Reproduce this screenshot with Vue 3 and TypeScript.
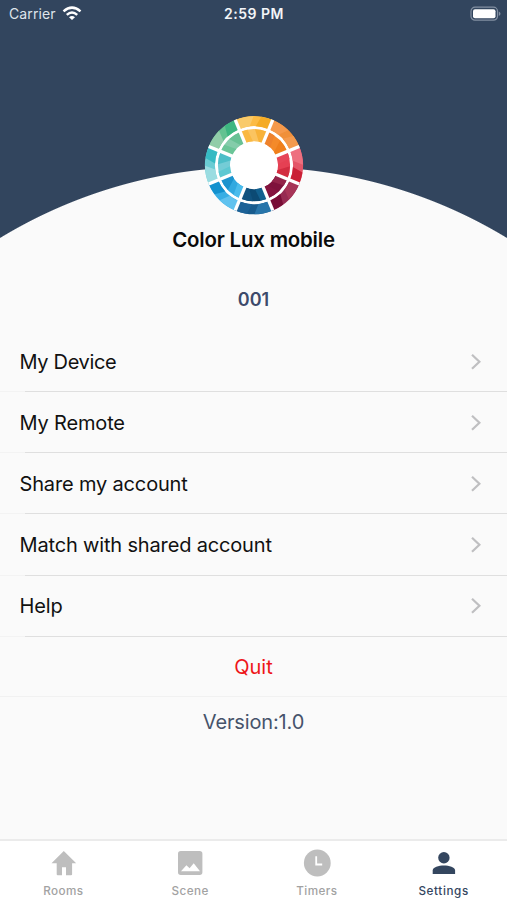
<script setup lang="ts">
interface MenuItem { label: string; key: string }
interface Facet { d: string; color: string }

const menu: MenuItem[] = [
  { label: 'My Device', key: 'device' },
  { label: 'My Remote', key: 'remote' },
  { label: 'Share my account', key: 'share' },
  { label: 'Match with shared account', key: 'match' },
  { label: 'Help', key: 'help' },
]

const point = (radius: number, degrees: number): string => {
  const a = (degrees * Math.PI) / 180
  return `${(radius * Math.sin(a)).toFixed(2)} ${(-radius * Math.cos(a)).toFixed(2)}`
}

// A ring slice whose side edges may lean: inner and outer arcs have their own angles.
const slice = (r0: number, r1: number, o0: number, o1: number, i0: number, i1: number): string =>
  `M${point(r1, o0)}A${r1} ${r1} 0 0 1 ${point(r1, o1)}L${point(r0, i1)}A${r0} ${r0} 0 0 0 ${point(r0, i0)}Z`

// Three tones for the outer cell, then three for the inner cell, clockwise from the top.
const tones: string[][] = [
  ['#f9ca69', '#fcbb43', '#f5ac25', '#fab942', '#fbc460', '#f8b239'],
  ['#f5994b', '#f0903a', '#f49a4d', '#ee822c', '#f48a2a', '#ef7f1c'],
  ['#ee707f', '#e45668', '#ca2036', '#e64558', '#e54053', '#d22c40'],
  ['#a73558', '#962b52', '#780d36', '#932449', '#7f123c', '#85143f'],
  ['#2875aa', '#175b8d', '#1c6297', '#12608f', '#0c4a74', '#10527f'],
  ['#60c2ef', '#38aee4', '#1391ce', '#4abcec', '#31a9e0', '#1c94ce'],
  ['#9adce1', '#6bccd4', '#36bac3', '#5dc8d2', '#74ccd6', '#4dbec8'],
  ['#91cda9', '#63c291', '#3db681', '#6bc598', '#84ccaa', '#68c195'],
]

const facets: Facet[] = tones.flatMap((t, i) => {
  const a = i * 45 - 22.5
  const b = a + 45
  return [
    { d: slice(39, 49, a, b, a, b), color: t[1] },
    { d: slice(39, 49, a, a + 22, a, a + 16), color: t[0] },
    { d: slice(39, 49, a + 31, b, a + 25, b), color: t[2] },
    { d: slice(24, 36, a, b, a, b), color: t[4] },
    { d: slice(24, 36, a, a + 12, a, a + 20), color: t[3] },
    { d: slice(24, 36, a + 24, b, a + 34, b), color: t[5] },
  ]
})

const spokes: number[] = Array.from({ length: 8 }, (_, i) => 22.5 + i * 45)
</script>

<template>
  <main class="screen">
    <header class="hero">
      <div class="status">
        <div class="carrier">
          <span>Carrier</span>
          <svg width="20" height="15" viewBox="0 0 20 15" fill="none" stroke="#fff" stroke-width="2.5">
            <path d="M1.5 5.4Q10-2.1 18.5 5.4M4.8 8.9Q10 4.1 15.2 8.9" />
            <path d="M7 11.3Q10 8.6 13 11.3L10 14Z" fill="#fff" stroke="none" />
          </svg>
        </div>
        <span class="clock">2:59 PM</span>
        <svg class="battery" width="31" height="16" viewBox="0 0 31 16">
          <rect x="1" y="1.2" width="26.5" height="13" rx="4" fill="none" stroke="#8390a2" stroke-width="1.2" />
          <rect x="3" y="3.2" width="22.5" height="9" rx="2" fill="#fff" />
          <path d="M28.8 5.5q1.7.7 1.7 2.2t-1.7 2.2z" fill="#8390a2" />
        </svg>
      </div>
      <svg class="logo" width="100" height="100" viewBox="-50 -50.2 100 100">
        <circle r="48.5" fill="#fff" />
        <path v-for="(f, i) in facets" :key="i" :d="f.d" :fill="f.color" />
        <line v-for="s in spokes" :key="s" y1="-23" y2="-49" :transform="`rotate(${s})`" stroke="#fff" stroke-width="3.3" />
      </svg>
    </header>

    <h1 class="title"><span>Color Lux mobile</span></h1>
    <p class="account"><span>001</span></p>

    <ul class="menu">
      <li v-for="item in menu" :key="item.key" class="row">
        <span :class="item.key">{{ item.label }}</span>
        <svg width="12" height="18" viewBox="0 0 12 18" fill="none" stroke="#bfbfc1" stroke-width="2.2">
          <path d="M2 1.8 9.4 8.8 2 15.8" />
        </svg>
      </li>
    </ul>
    <button class="quit" type="button"><span>Quit</span></button>
    <p class="version"><span>Version:1.0</span></p>

    <nav class="tabs">
      <a class="tab">
        <svg width="28" height="28" viewBox="0 0 28 28" fill="currentColor">
          <path d="M14.8 2 27.2 14.2H23.1V25.2Q23.1 26.3 22 26.3H17V18.3H13V26.3H8.8Q7.7 26.3 7.7 25.2V14.2H2.5Z" />
        </svg>
        <span>Rooms</span>
      </a>
      <a class="tab">
        <svg width="28" height="28" viewBox="0 0 28 28" fill="currentColor" fill-rule="evenodd">
          <path d="M4.8 2H23.6Q26.4 2 26.4 4.8V23.3Q26.4 26 23.6 26H4.8Q2 26 2 23.3V4.8Q2 2 4.8 2ZM5 22.3H24L17.7 14.2 13.6 19.3 10.4 16.3Z" />
        </svg>
        <span>Scene</span>
      </a>
      <a class="tab">
        <svg width="28" height="28" viewBox="0 0 28 28">
          <circle cx="14.3" cy="14" r="13.4" fill="currentColor" />
          <path d="M13.2 7.2V15.5H19.2" fill="none" stroke="#fff" stroke-width="1.8" />
        </svg>
        <span>Timers</span>
      </a>
      <a class="tab active">
        <svg width="28" height="28" viewBox="0 0 28 28" fill="currentColor">
          <circle cx="13.9" cy="8.7" r="5.7" />
          <path d="M2.7 25V21.5C2.7 18.2 8.7 16.6 13.9 16.6S25.1 18.2 25.1 21.5V25Z" />
        </svg>
        <span>Settings</span>
      </a>
    </nav>
  </main>
</template>

<style>
body { margin: 0; }
</style>

<style scoped>
.screen {
  width: 507px;
  height: 900px;
  display: flex;
  flex-direction: column;
  overflow: hidden;
  background: #fafafa;
  color: #111;
  font-family: Inter, "Liberation Sans", sans-serif;
}
.hero {
  height: 240px;
  flex: none;
  display: flex;
  flex-direction: column;
  align-items: center;
  background: radial-gradient(circle at 50% 655px, #fafafa 487.5px, #32455e 488.5px);
}
.status {
  width: 100%;
  height: 28px;
  display: grid;
  grid-template-columns: 1fr auto 1fr;
  align-items: center;
  box-sizing: border-box;
  padding: 0 6px 1px 9px;
  color: #f3f5f8;
  font-size: 14px;
}
.carrier { display: flex; align-items: center; gap: 6px; color: #dfe4eb; letter-spacing: 0.1px; }
.clock { font-weight: 600; font-size: 14px; letter-spacing: 0.5px; margin-right: 2px; }
.battery { justify-self: end; }
.logo { display: block; margin-top: 87px; }
.title {
  margin: -14px 0 0;
  height: 28px;
  line-height: 28px;
  text-align: center;
  font-size: 20.4px;
  font-weight: 600;
  letter-spacing: -0.17px;
  color: #0a0a0a;
}
.account {
  margin: 32px 0 0;
  height: 28px;
  line-height: 28px;
  text-align: center;
  font-size: 18px;
  font-weight: 600;
  color: #3d4a6b;
}
.menu { list-style: none; margin: 17px 0 0; padding: 0; }
.row {
  height: 61.15px;
  box-sizing: border-box;
  display: flex;
  align-items: center;
  justify-content: space-between;
  padding: 0 25px 0 19.5px;
  font-size: 20px;
  letter-spacing: -0.16px;
  background: linear-gradient(to right, #f3f3f3 25px, #dfdfdf 25px) bottom / 100% 1px no-repeat;
}
.device { letter-spacing: -0.33px; }
.quit {
  height: 60.75px;
  flex: none;
  border: 0;
  border-bottom: 1px solid #f1f1f1;
  background: none;
  padding: 1px 0 0;
  font: inherit;
  font-size: 20px;
  color: #ee1519;
}
.version {
  margin: 11px 0 0;
  height: 28px;
  line-height: 28px;
  text-align: center;
  font-size: 20px;
  letter-spacing: -0.15px;
  color: #46536b;
}
.tabs {
  height: 61px;
  flex: none;
  box-sizing: border-box;
  margin-top: auto;
  display: grid;
  grid-template-columns: repeat(4, 1fr);
  border-top: 2px solid #ebebeb;
  background: #fff;
}
.tab {
  display: flex;
  flex-direction: column;
  align-items: center;
  padding-top: 8px;
  gap: 7px;
  color: #bebebe;
  font-size: 11.7px;
  line-height: 15px;
  font-weight: 500;
  letter-spacing: 0.45px;
}
.tab span { color: #a2a2a2; }
.active, .tab.active span { color: #34465f; }
.active span { letter-spacing: 0.6px; }
</style>
